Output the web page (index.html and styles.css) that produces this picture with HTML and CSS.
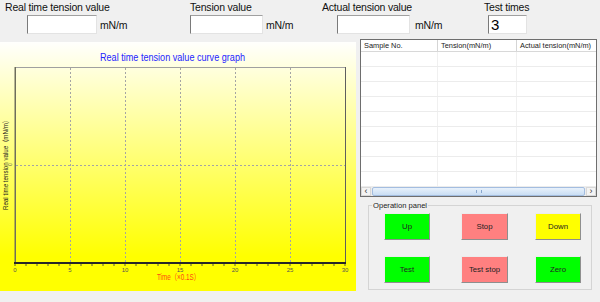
FILE: index.html
```html
<!DOCTYPE html>
<html lang="en">
<head>
<meta charset="utf-8">
<title>Tension test</title>
<link rel="stylesheet" href="styles.css">
</head>
<body>
<div class="top">
  <div class="field f1">
    <div class="lbl">Real time tension value</div>
    <div class="inrow"><div class="box"></div><span class="unit">mN/m</span></div>
  </div>
  <div class="field f2">
    <div class="lbl">Tension value</div>
    <div class="inrow"><div class="box"></div><span class="unit">mN/m</span></div>
  </div>
  <div class="field f3">
    <div class="lbl">Actual tension value</div>
    <div class="inrow"><div class="box"></div><span class="unit">mN/m</span></div>
  </div>
  <div class="field f4">
    <div class="lbl">Test times</div>
    <div class="inrow"><div class="box num">3</div></div>
  </div>
</div>
<div class="main">
  <div class="chart">
    <svg class="plot" width="356" height="249" viewBox="0 0 356 249">
      <text class="ttl" x="100" y="19" textLength="145" lengthAdjust="spacingAndGlyphs">Real time tension value curve graph</text>
      <g class="grid">
        <line x1="70.5" y1="26" x2="70.5" y2="220"/>
        <line x1="125.5" y1="26" x2="125.5" y2="220"/>
        <line x1="180.5" y1="26" x2="180.5" y2="220"/>
        <line x1="235.5" y1="26" x2="235.5" y2="220"/>
        <line x1="290.5" y1="26" x2="290.5" y2="220"/>
        <line x1="16" y1="123.5" x2="345" y2="123.5"/>
      </g>
      <line class="ax-top" x1="15" y1="25.5" x2="346" y2="25.5"/>
      <line class="ax-right" x1="345.5" y1="25" x2="345.5" y2="221"/>
      <line class="ax-left" x1="15.25" y1="25" x2="15.25" y2="221"/>
      <line class="ax-bottom" x1="14" y1="221" x2="346" y2="221"/>
      <path class="ticks" d="M15 222v2M26 222v2M37 222v2M48 222v2M59 222v2M70 222v2M81 222v2M92 222v2M103 222v2M114 222v2M125 222v2M136 222v2M147 222v2M158 222v2M169 222v2M180 222v2M191 222v2M202 222v2M213 222v2M224 222v2M235 222v2M246 222v2M257 222v2M268 222v2M279 222v2M290 222v2M301 222v2M312 222v2M323 222v2M334 222v2M345 222v2"/>
      <g class="xl">
        <text x="15" y="229.5">0</text>
        <text x="70" y="229.5">5</text>
        <text x="125" y="229.5">10</text>
        <text x="180" y="229.5">15</text>
        <text x="235" y="229.5">20</text>
        <text x="290" y="229.5">25</text>
        <text x="345" y="229.5">30</text>
      </g>
      <text class="xt" x="157" y="238" textLength="43" lengthAdjust="spacingAndGlyphs">Time（×0.1S）</text>
      <text class="yt" transform="translate(7.5,168) rotate(-90)" textLength="93" lengthAdjust="spacingAndGlyphs">Real time tension value（mN/m）</text>
      <text class="y0" transform="translate(11.5,124) rotate(-90)">0</text>
    </svg>
  </div>
  <div class="side">
    <div class="listview">
      <div class="thead">
        <div class="th">Sample No.</div>
        <div class="th">Tension(mN/m)</div>
        <div class="th">Actual tension(mN/m)</div>
      </div>
      <div class="tbody">
        <div class="tr"><div class="td"></div><div class="td"></div><div class="td"></div></div>
        <div class="tr"><div class="td"></div><div class="td"></div><div class="td"></div></div>
        <div class="tr"><div class="td"></div><div class="td"></div><div class="td"></div></div>
        <div class="tr"><div class="td"></div><div class="td"></div><div class="td"></div></div>
        <div class="tr"><div class="td"></div><div class="td"></div><div class="td"></div></div>
        <div class="tr"><div class="td"></div><div class="td"></div><div class="td"></div></div>
        <div class="tr"><div class="td"></div><div class="td"></div><div class="td"></div></div>
        <div class="tr"><div class="td"></div><div class="td"></div><div class="td"></div></div>
        <div class="tr"><div class="td"></div><div class="td"></div><div class="td"></div></div>
        <div class="tr"><div class="td"></div><div class="td"></div><div class="td"></div></div>
      </div>
      <div class="hscroll">
        <div class="sb-btn">&lsaquo;</div>
        <div class="sb-thumb"><span class="grip"></span></div>
        <div class="sb-btn">&rsaquo;</div>
      </div>
    </div>
    <fieldset class="ops">
      <legend>Operation panel</legend>
      <div class="btns">
        <button class="btn green">Up</button>
        <button class="btn red">Stop</button>
        <button class="btn yellow">Down</button>
        <button class="btn green">Test</button>
        <button class="btn red">Test stop</button>
        <button class="btn green">Zero</button>
      </div>
    </fieldset>
  </div>
</div>
</body>
</html>
```

FILE: styles.css
```css
html, body {
  margin: 0;
  padding: 0;
}
body {
  width: 600px;
  height: 302px;
  overflow: hidden;
  background: #f0f0f0;
  font-family: "Liberation Sans", Arial, "Noto Sans CJK SC", sans-serif;
  color: #111;
}

/* top fields */
.top {
  display: flex;
  height: 39px;
}
.field {
  box-sizing: border-box;
}
.f1 { width: 190px; padding-left: 5px; }
.f2 { width: 132px; }
.f3 { width: 162px; }
.f4 { width: 116px; }
.f1 .inrow { margin-left: 22px; }
.f3 .inrow { margin-left: 15px; }
.f4 .inrow { margin-left: 4px; }
.lbl {
  font-size: 10.5px;
  line-height: 12px;
  margin-top: 1px;
  letter-spacing: -0.2px;
  white-space: nowrap;
}
.inrow {
  display: flex;
  align-items: center;
  margin-top: 2px;
}
.box {
  width: 73px;
  height: 19px;
  box-sizing: border-box;
  background: #fff;
  border: 1px solid;
  border-color: #a0a0a0 #e3e3e3 #e3e3e3 #7a7a7a;
}
.f1 .box { width: 70px; }
.box.num {
  width: 39px;
  font-size: 15px;
  line-height: 17px;
  padding-left: 2px;
  color: #000;
}
.unit {
  font-size: 10.5px;
  letter-spacing: -0.2px;
  margin-left: 3px;
}
.f3 .unit { margin-left: 5px; }

/* main area */
.main {
  display: flex;
  align-items: flex-start;
}
.chart {
  margin-top: 3px;
  width: 356px;
  height: 249px;
  background: linear-gradient(to bottom, #fffffd 0%, #ffff00 86%, #ffff00 100%);
}
.plot {
  display: block;
  font-family: "Liberation Sans", Arial, "Noto Sans CJK SC", sans-serif;
}
.ttl { font-size: 10.5px; fill: #2424ff; }
.grid line { stroke: #a4a4a4; stroke-width: 1; stroke-dasharray: 2 2; }
.ax-top { stroke: #a0a0a0; stroke-width: 1; }
.ax-right { stroke: #5e5e5e; stroke-width: 1; }
.ax-left { stroke: #6e6e5c; stroke-width: 1.5; }
.ax-bottom { stroke: #262626; stroke-width: 2; }
.ticks { stroke: #5a5a40; stroke-width: 1; }
.xl text { font-size: 6px; fill: #555; text-anchor: middle; }
.xt { font-size: 8.5px; fill: #ff4a10; }
.yt { font-size: 7px; fill: #222; }
.y0 { font-size: 5px; fill: #555; }

.side {
  margin-left: 4px;
  width: 237px;
}
.listview {
  height: 158px;
  box-sizing: border-box;
  border: 1px solid #6e6e6e;
  background: #fff;
  display: flex;
  flex-direction: column;
}
.thead, .tr {
  display: grid;
  grid-template-columns: 77px 79px 1fr;
}
.thead {
  height: 11px;
  border-bottom: 1px solid #d8d8d8;
  flex: none;
}
.th {
  font-size: 7.4px;
  line-height: 11px;
  padding-left: 3px;
  border-right: 1px solid #d5d5d5;
  white-space: nowrap;
  overflow: hidden;
  color: #222;
}
.th:last-child { border-right: 0; }
.tbody {
  flex: 1;
  overflow: hidden;
}
.tr {
  height: 15px;
  box-sizing: border-box;
  border-bottom: 1px solid #ececec;
}
.td { border-right: 1px solid #f0f0f0; }
.td:last-child { border-right: 0; }

.hscroll {
  flex: none;
  height: 9px;
  display: flex;
  background: #ececec;
}
.sb-btn {
  width: 10px;
  box-sizing: border-box;
  font-size: 9px;
  line-height: 7px;
  text-align: center;
  color: #333;
  background: #f4f4f4;
  border: 1px solid #d8d8d8;
}
.sb-thumb {
  flex: 1;
  margin: 0 1px;
  box-sizing: border-box;
  border: 1px solid #a3bde0;
  border-radius: 2px;
  background: linear-gradient(to bottom, #e8f1fb, #c9def4);
  display: flex;
  align-items: center;
  justify-content: center;
}
.grip {
  width: 4px;
  height: 3px;
  border-left: 1px solid #88a7cf;
  border-right: 1px solid #88a7cf;
}

/* operation panel */
.ops {
  margin: 4px 0 0 8px;
  width: 224px;
  box-sizing: border-box;
  border: 1px solid #d4d4d4;
  padding: 3px 0 6px 15px;
  min-width: 0;
}
.ops legend {
  font-size: 7.6px;
  line-height: 9px;
  padding: 0 1px;
  margin-left: -12px;
  color: #222;
}
.btns {
  display: grid;
  grid-template-columns: 77px 74px 46px;
  row-gap: 16px;
}
.btn {
  width: 46px;
  height: 27px;
  box-sizing: border-box;
  padding: 0;
  margin: 0;
  border: 1px solid;
  border-color: #ececec #8e8e8e #8e8e8e #ececec;
  font-family: "Liberation Sans", Arial, sans-serif;
  font-size: 7.8px;
  color: #222;
  display: flex;
  align-items: center;
  justify-content: center;
}
.red { width: 47px; }
.green { background: #00ff00; }
.red { background: #ff8080; }
.yellow { background: #ffff00; }
```
